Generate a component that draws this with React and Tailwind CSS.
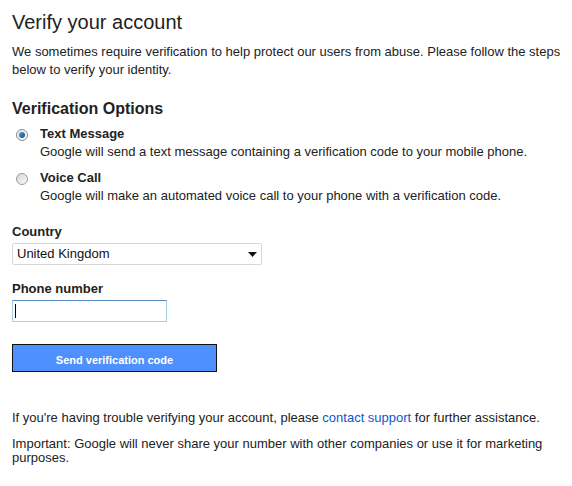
export default function App() {
  const font = { fontFamily: '"Liberation Sans", Arial, sans-serif' };
  return (
    <div className="w-[572px] h-[486px] bg-white text-[#222] pl-[12px] pr-[2px] pt-[9px]" style={font}>
      <h1 className="text-[20px] leading-[26px] font-normal text-[#222]">Verify your account</h1>
      <p className="mt-[8px] text-[13px] leading-[18px] text-[#222]">
        We sometimes require verification to help protect our users from abuse. Please follow the steps below to verify your identity.
      </p>
      <h2 className="mt-[20px] text-[16px] leading-[20px] font-bold text-[#222]">Verification Options</h2>
      <div className="mt-[6px] flex flex-col gap-[8px]">
        <div className="flex">
          <div className="w-[28px] pt-[4px] pl-[4px]">
            <div className="w-[12px] h-[12px] rounded-full border border-[#8a8a8a] bg-gradient-to-br from-[#e8e8e8] to-[#fdfdfd] flex items-center justify-center">
              <div className="w-[6px] h-[6px] rounded-full bg-gradient-to-br from-[#4aa0d8] to-[#0b4f8c]" />
            </div>
          </div>
          <div className="text-[13px] leading-[18px]">
            <div className="font-bold">Text Message</div>
            <div>Google will send a text message containing a verification code to your mobile phone.</div>
          </div>
        </div>
        <div className="flex">
          <div className="w-[28px] pt-[4px] pl-[4px]">
            <div className="w-[12px] h-[12px] rounded-full border border-[#9a9a9a] bg-gradient-to-br from-[#d6d6d6] to-[#fafafa]" />
          </div>
          <div className="text-[13px] leading-[18px]">
            <div className="font-bold">Voice Call</div>
            <div>Google will make an automated voice call to your phone with a verification code.</div>
          </div>
        </div>
      </div>
      <div className="mt-[18px] text-[13px] leading-[17px] font-bold">Country</div>
      <div className="mt-[3px] w-[250px] h-[22px] border border-[#d8d8d8] rounded-[2px] flex items-center justify-between pl-[4px] pr-[4px] text-[13px] text-[#111]">
        <span>United Kingdom</span>
        <svg width="9" height="5" viewBox="0 0 9 5"><path d="M0 0H9L4.5 5Z" fill="#111" /></svg>
      </div>
      <div className="mt-[15px] text-[13px] leading-[17px] font-bold">Phone number</div>
      <div className="mt-[3px] w-[155px] h-[22px] border border-[#a9cfe8] border-t-[#5a8bbd] flex items-center pl-[2px]">
        <div className="w-[1px] h-[14px] bg-black" />
      </div>
      <button className="mt-[22px] w-[205px] h-[28px] bg-[#4d90fe] border border-[#111] text-white text-[11px] font-bold flex items-end justify-center pb-[3px]" style={font}>
        Send verification code
      </button>
      <p className="mt-[39px] text-[13px] leading-[14px]">
        If you're having trouble verifying your account, please <span className="text-[#15c]">contact support</span> for further assistance.
      </p>
      <p className="mt-[12px] text-[13px] leading-[14px] pr-[20px]">
        Important: Google will never share your number with other companies or use it for marketing purposes.
      </p>
    </div>
  );
}
